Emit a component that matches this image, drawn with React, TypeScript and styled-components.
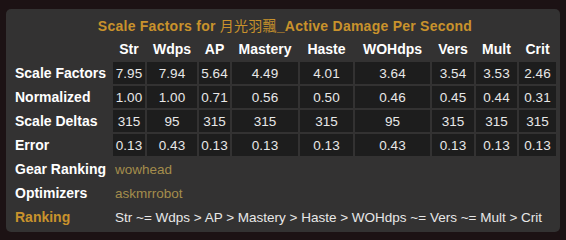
import styled, { createGlobalStyle } from "styled-components";

const GlobalStyle = createGlobalStyle`
  html, body {
    margin: 0;
    padding: 0;
    background: #1c1214;
  }
  body {
    font-family: "Liberation Sans", Arial, sans-serif;
  }
`;

interface IStatRow {
  label: string;
  values: string[];
}

const columns = [
  { name: "Str", width: 32 },
  { name: "Wdps", width: 50 },
  { name: "AP", width: 31 },
  { name: "Mastery", width: 66 },
  { name: "Haste", width: 53 },
  { name: "WOHdps", width: 75 },
  { name: "Vers", width: 42 },
  { name: "Mult", width: 41 },
  { name: "Crit", width: 37 },
];

const rows: IStatRow[] = [
  { label: "Scale Factors", values: ["7.95", "7.94", "5.64", "4.49", "4.01", "3.64", "3.54", "3.53", "2.46"] },
  { label: "Normalized", values: ["1.00", "1.00", "0.71", "0.56", "0.50", "0.46", "0.45", "0.44", "0.31"] },
  { label: "Scale Deltas", values: ["315", "95", "315", "315", "315", "95", "315", "315", "315"] },
  { label: "Error", values: ["0.13", "0.43", "0.13", "0.13", "0.13", "0.43", "0.13", "0.13", "0.13"] },
];

const App = () => {
  return (
    <Page>
      <GlobalStyle />
      <Panel>
        <Title>
          Scale Factors for <Cjk>月光羽飄</Cjk>_Active Damage Per Second
        </Title>
        <StatTable>
          <colgroup>
            <col style={{ width: 96 }} />
            {columns.map((c) => (
              <col key={c.name} style={{ width: c.width }} />
            ))}
          </colgroup>
          <thead>
            <tr>
              <th />
              {columns.map((c) => (
                <HeadCell key={c.name}>{c.name}</HeadCell>
              ))}
            </tr>
          </thead>
          <tbody>
            {rows.map((row) => (
              <tr key={row.label}>
                <RowLabel>{row.label}</RowLabel>
                {row.values.map((v, i) => (
                  <ValueCell key={i}>{v}</ValueCell>
                ))}
              </tr>
            ))}
            <tr>
              <RowLabel>Gear Ranking</RowLabel>
              <InfoCell colSpan={9}>
                <SiteLink>wowhead</SiteLink>
              </InfoCell>
            </tr>
            <tr>
              <RowLabel>Optimizers</RowLabel>
              <InfoCell colSpan={9}>
                <SiteLink>askmrrobot</SiteLink>
              </InfoCell>
            </tr>
            <tr>
              <RowLabel $gold>Ranking</RowLabel>
              <InfoCell colSpan={9}>
                Str ~= Wdps &gt; AP &gt; Mastery &gt; Haste &gt; WOHdps ~= Vers ~= Mult &gt; Crit
              </InfoCell>
            </tr>
          </tbody>
        </StatTable>
      </Panel>
    </Page>
  );
};

export default App;

// Styled Components
const Page = styled.div`
  width: 566px;
  height: 240px;
  padding: 9px 0 0 6px;
  box-sizing: border-box;
`;

const Panel = styled.div`
  width: 554px;
  height: 223px;
  box-sizing: border-box;
  padding: 5px 3px 0 7px;
  background: #333232;
  border-radius: 5px;
`;

const Title = styled.div`
  height: 22px;
  line-height: 22px;
  text-align: center;
  font-size: 14px;
  font-weight: bold;
  letter-spacing: 0.25px;
  color: #c9922c;
`;

const Cjk = styled.span`
  font-family: "Noto Sans CJK TC", "Noto Sans CJK SC", sans-serif;
  font-weight: normal;
`;

const StatTable = styled.table`
  table-layout: fixed;
  border-collapse: separate;
  border-spacing: 2px;
  width: 545px;
  font-size: 13.5px;
  color: #e6e6e6;

  td, th {
    height: 22px;
    padding: 0;
    box-sizing: border-box;
  }
`;

const HeadCell = styled.th`
  text-align: center;
  font-size: 14px;
  font-weight: bold;
  color: #ffffff;
`;

const RowLabel = styled.th<{ $gold?: boolean }>`
  text-align: left;
  font-size: 14px;
  font-weight: bold;
  white-space: nowrap;
  color: ${(p) => (p.$gold ? "#c9922c" : "#ffffff")};
`;

const ValueCell = styled.td`
  text-align: center;
  background: #1d1d1d;
  color: #e8e8e8;
`;

const InfoCell = styled.td`
  text-align: left;
  white-space: nowrap;
  padding-left: 2px !important;
  color: #e8e8e8;
`;

const SiteLink = styled.span`
  color: #a48d4c;
`;
